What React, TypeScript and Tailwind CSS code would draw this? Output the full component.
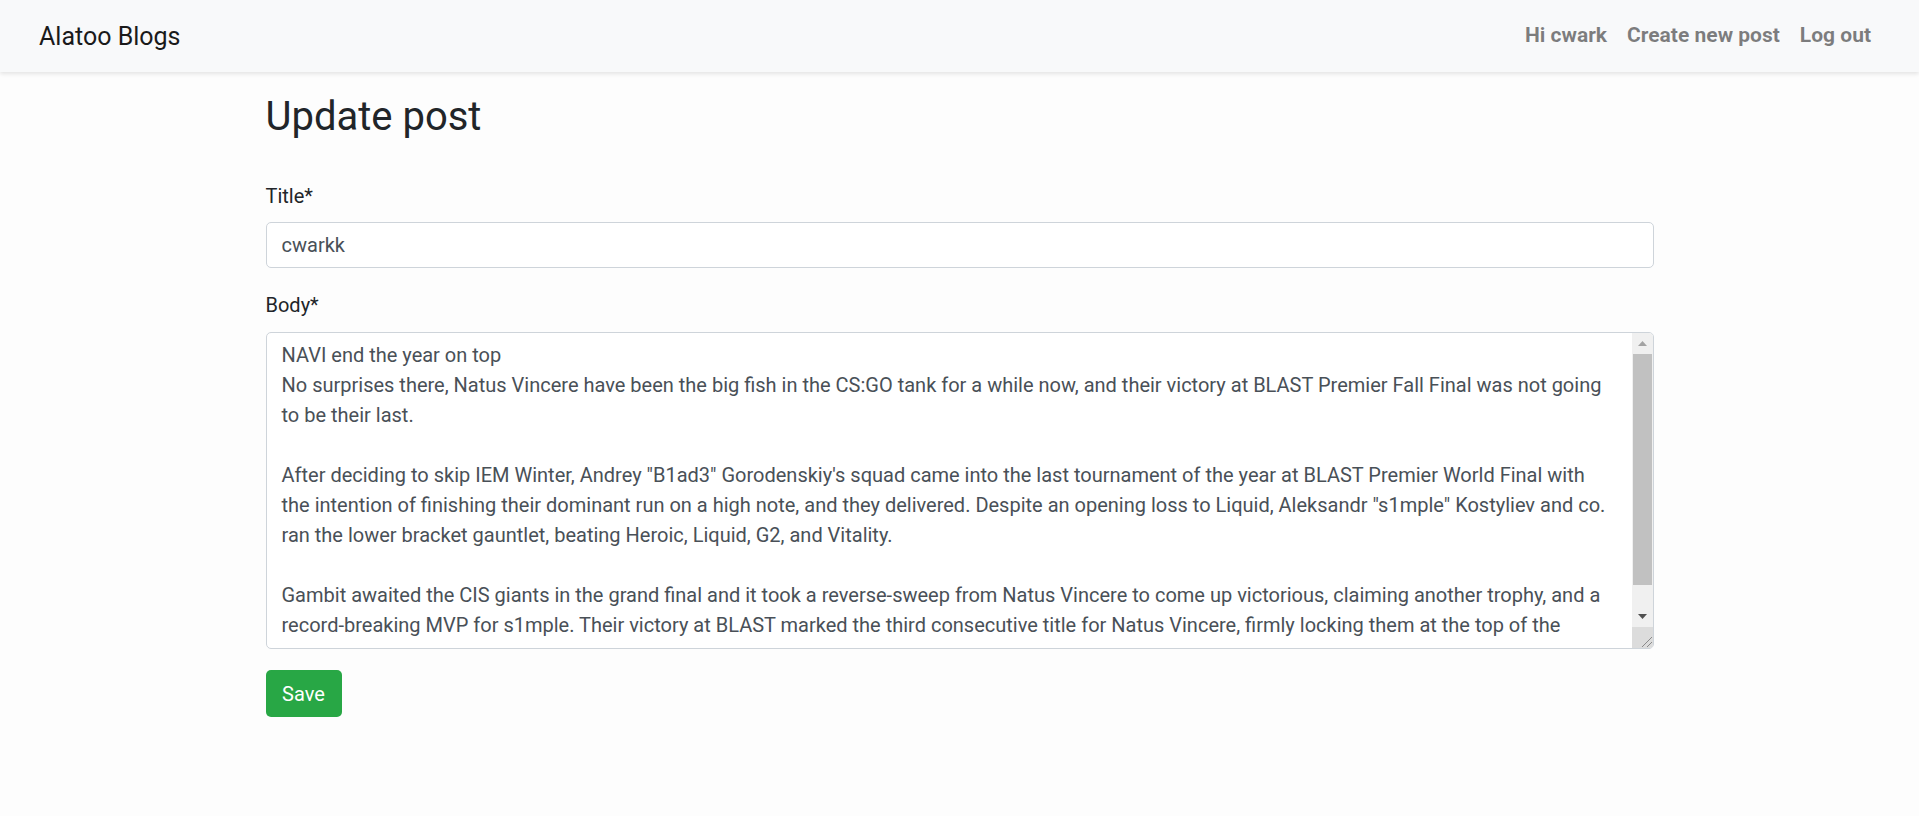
import React from 'react'

const bodyText = `NAVI end the year on top
No surprises there, Natus Vincere have been the big fish in the CS:GO tank for a while now, and their victory at BLAST Premier Fall Final was not going to be their last.

After deciding to skip IEM Winter, Andrey "B1ad3" Gorodenskiy's squad came into the last tournament of the year at BLAST Premier World Final with the intention of finishing their dominant run on a high note, and they delivered. Despite an opening loss to Liquid, Aleksandr "s1mple" Kostyliev and co. ran the lower bracket gauntlet, beating Heroic, Liquid, G2, and Vitality.

Gambit awaited the CIS giants in the grand final and it took a reverse-sweep from Natus Vincere to come up victorious, claiming another trophy, and a record-breaking MVP for s1mple. Their victory at BLAST marked the third consecutive title for Natus Vincere, firmly locking them at the top of the rankings as the year comes to a close.`

const FakeScrollbar: React.FC = () => {
  return (
    <div className="w-[21px] flex flex-col bg-[#f0f0f0] rounded-tr-[4px] rounded-br-[4px] overflow-hidden">
      <div className="h-[21px] flex items-center justify-center">
        <svg width="9" height="5" viewBox="0 0 9 5">
          <polygon points="0,5 9,5 4.5,0" fill="#a3a3a3" />
        </svg>
      </div>
      <div className="h-[231px] bg-[#c1c1c1] mx-[1px]"></div>
      <div className="flex-1"></div>
      <div className="h-[21px] flex items-center justify-center">
        <svg width="9" height="5" viewBox="0 0 9 5">
          <polygon points="0,0 9,0 4.5,5" fill="#505050" />
        </svg>
      </div>
      <div className="h-[21px] bg-[#dcdcdc] flex items-end justify-end">
        <svg width="14" height="14" viewBox="0 0 14 14">
          <line x1="13" y1="3" x2="3" y2="13" stroke="#8a8a8a" strokeWidth="1" />
          <line x1="13" y1="8" x2="8" y2="13" stroke="#8a8a8a" strokeWidth="1" />
        </svg>
      </div>
    </div>
  )
}

const App: React.FC = () => {
  return (
    <div className="min-h-[816px] bg-[#fdfdfd] font-[Roboto,sans-serif] text-[#212529]">
      <nav className="h-[72px] bg-[#f8f9fa] shadow-[0_2px_4px_rgba(0,0,0,0.1)] flex items-center justify-between pl-[39px] pr-[38px]">
        <span className="text-[25px] leading-[37px] text-[#1a1a1a]">Alatoo Blogs</span>
        <div className="flex items-center text-[21px] font-bold text-black/50">
          <span className="px-[10px]">Hi cwark</span>
          <span className="px-[10px]">Create new post</span>
          <span className="px-[10px]">Log out</span>
        </div>
      </nav>

      <div className="w-[1388px] mx-auto">
        <h1 className="mt-[21px] text-[40px] leading-[48px] font-normal">Update post</h1>

        <form>
          <label className="block mt-[40px] text-[20px] leading-[30px]">Title*</label>
          <input
            type="text"
            defaultValue="cwarkk"
            className="block w-full mt-[11px] h-[46px] px-[15px] text-[20px] text-[#495057] bg-white border border-[#ced4da] rounded-[5px] outline-none"
          />

          <label className="block mt-[22px] text-[20px] leading-[30px]">Body*</label>
          <div className="mt-[12px] h-[317px] flex items-start bg-white border border-[#ced4da] rounded-[5px]">
            <textarea
              defaultValue={bodyText}
              className="flex-1 h-[305px] pl-[15px] pr-[15px] pt-[7px] pb-0 text-[20px] leading-[30px] text-[#495057] bg-transparent resize-none overflow-hidden outline-none rounded-[5px]"
            />
            <div className="self-stretch flex">
              <FakeScrollbar />
            </div>
          </div>

          <button
            type="button"
            className="mt-[21px] h-[47px] w-[76px] bg-[#28a745] text-white text-[20px] rounded-[5px]"
          >
            Save
          </button>
        </form>
      </div>
    </div>
  )
}

export default App
